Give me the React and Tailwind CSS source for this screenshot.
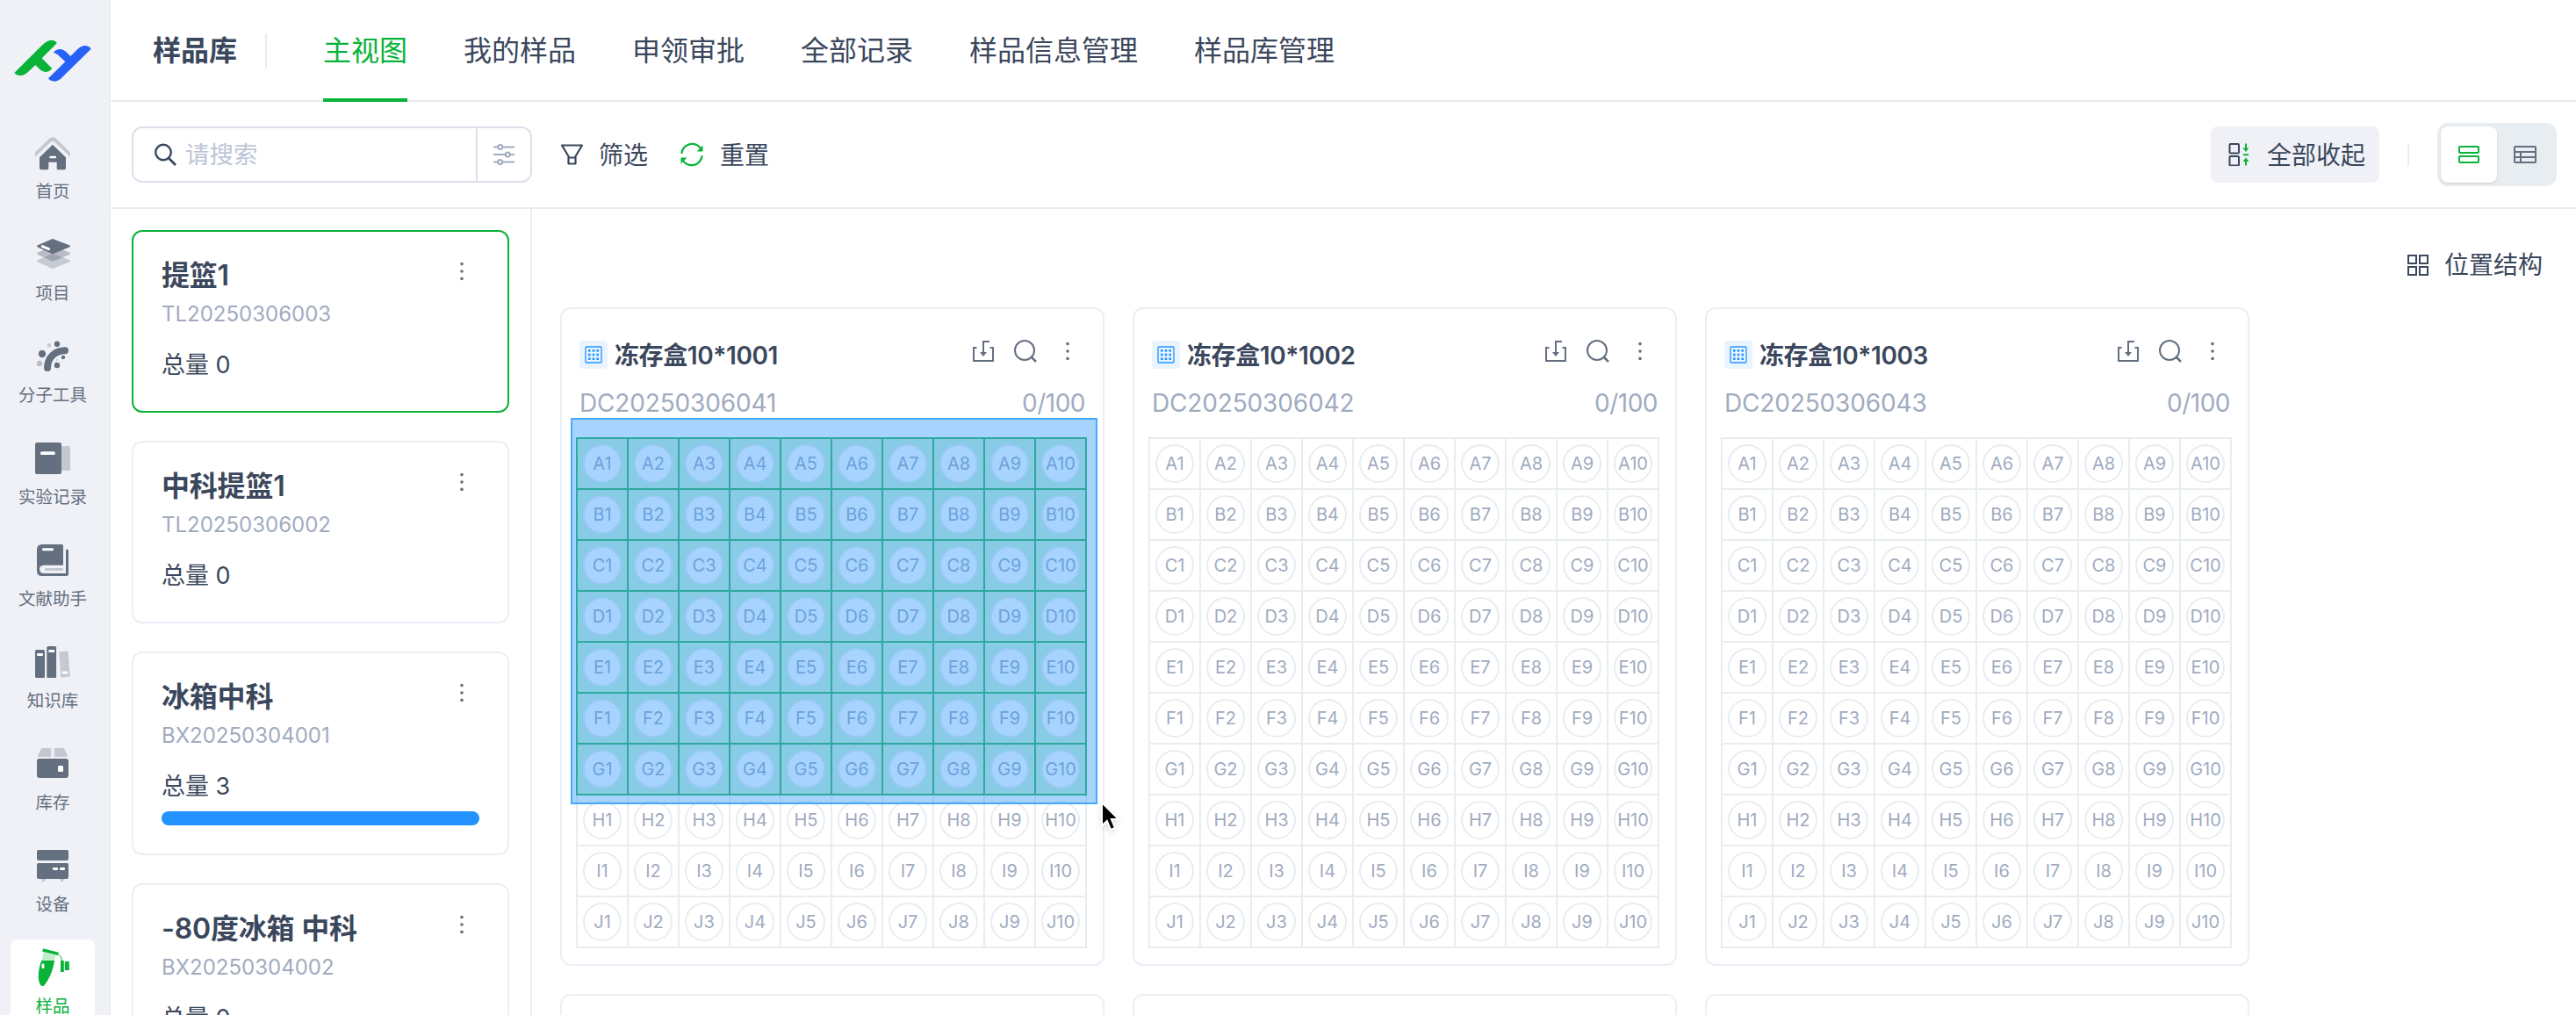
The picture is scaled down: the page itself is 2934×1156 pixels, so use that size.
import clsx from 'clsx';

const navItems = [
  { key: 'home', label: '首页' },
  { key: 'project', label: '项目' },
  { key: 'molecule', label: '分子工具' },
  { key: 'record', label: '实验记录' },
  { key: 'paper', label: '文献助手' },
  { key: 'library', label: '知识库' },
  { key: 'stock', label: '库存' },
  { key: 'device', label: '设备' },
  { key: 'sample', label: '样品' },
];

const tabs = ['主视图', '我的样品', '申领审批', '全部记录', '样品信息管理', '样品库管理'];

const containers = [
  { name: '提篮1', code: 'TL20250306003', total: 0, active: true },
  { name: '中科提篮1', code: 'TL20250306002', total: 0 },
  { name: '冰箱中科', code: 'BX20250304001', total: 3, percent: 100 },
  { name: '-80度冰箱 中科', code: 'BX20250304002', total: 0 },
];

const boxes = [
  { name: '冻存盒10*1001', code: 'DC20250306041', selectedRows: 7 },
  { name: '冻存盒10*1002', code: 'DC20250306042', selectedRows: 0 },
  { name: '冻存盒10*1003', code: 'DC20250306043', selectedRows: 0 },
];

const rows = ['A', 'B', 'C', 'D', 'E', 'F', 'G', 'H', 'I', 'J'];
const cols = [1, 2, 3, 4, 5, 6, 7, 8, 9, 10];

function Logo() {
  return (
    <svg className="w-[88px] h-12" viewBox="48 46 264 144">
      <path fill="#08b338" d="M49 160 L143 66 Q161 48 175 48 Q188 48 195 58 L143 110 L178 145 Q168 157 155 157 Q146 157 137 149 L121 133 L99 154 Q84 169 70 169 Q56 169 49 160Z" />
      <path fill="#2762f6" d="M183 90 Q192 79 205 79 Q214 79 223 86 L241 103 L262 82 Q277 67 290 67 Q304 67 311 78 L215 173 Q200 189 187 189 Q172 189 165 179 L223 122 L207 107 Q198 95 183 90Z" />
    </svg>
  );
}

const DARK = '#646f80';
const LIGHT = '#c4c9d1';

function NavIcon({ name }) {
  return (
    <svg className="size-12 shrink-0" viewBox="0 0 48 48" fill={DARK}>
      {name === 'home' && (
        <>
          <path fill={LIGHT} d="M4 23.5 L20.5 7.5 Q24 4.5 27.5 7.5 L44 23.5 V28.7 L26 11.5 Q24 10 22 11.5 L4 28.7Z" />
          <path d="M24 14.7 L39 29.3 V41.5 Q39 43.3 37.2 43.3 H30.2 Q28.7 43.3 28.7 41.8 V34.7 H19.3 V41.8 Q19.3 43.3 17.8 43.3 H10.8 Q9 43.3 9 41.5 V29.3Z" />
          <rect x="20.3" y="27.7" width="7.8" height="2.6" rx="1.2" fill="#fff" />
        </>
      )}
      {name === 'project' && (
        <>
          <path fill={DARK} fillOpacity="0.3" d="M25.3 23.2 L43 30 Q45 31.2 43 32.4 L25.3 39.6 Q24 40.2 22.7 39.6 L7 32.4 Q5 31.2 7 30 L22.7 23.2 Q24 22.6 25.3 23.2Z" />
          <path fill={DARK} fillOpacity="0.4" d="M25.3 14.8 L43 21.6 Q45 22.8 43 24 L25.3 31.2 Q24 31.8 22.7 31.2 L7 24 Q5 22.8 7 21.6 L22.7 14.8 Q24 14.2 25.3 14.8Z" />
          <path d="M25.3 6.4 L43 13.2 Q45 14.4 43 15.6 L25.3 22.8 Q24 23.4 22.7 22.8 L7 15.6 Q5 14.4 7 13.2 L22.7 6.4 Q24 5.8 25.3 6.4Z" />
          <path d="M12.3 14.6 L19.6 17.6" stroke="#fff" strokeWidth="3" strokeLinecap="round" />
        </>
      )}
      {name === 'molecule' && (
        <>
          <path d="M18 37 C18 26 26 17.2 38 17.2" fill="none" stroke={DARK} strokeWidth="8" strokeLinecap="round" />
          <circle cx="12" cy="21" r="4.2" />
          <circle cx="29" cy="9.8" r="3.2" />
          <circle cx="36" cy="25" r="2.2" />
          <circle cx="29" cy="34" r="3.2" />
          <circle cx="20" cy="11.3" r="2.2" fill={LIGHT} />
          <circle cx="9" cy="32" r="3.2" fill="#b8bdc6" />
          <circle cx="29" cy="28" r="1" fill={LIGHT} />
        </>
      )}
      {name === 'record' && (
        <>
          <rect x="28" y="10" width="16" height="28" rx="1.5" fill={LIGHT} />
          <rect x="4" y="6" width="30" height="36" rx="2" />
          <rect x="10" y="16.2" width="16.8" height="3.8" rx="1.5" fill="#fff" />
        </>
      )}
      {name === 'paper' && (
        <>
          <path d="M12 6 H34.5 Q36 6 36 7.5 V29.7 H14 Q9 30 9 34.3 Q9 39 14 39 H39 V12 H42 V40 Q42 42 40 42 H12 Q6 42 6 36 V12 Q6 6 12 6Z" />
          <rect x="12" y="10.2" width="13" height="3" rx="1.3" fill="#fff" />
          <rect x="15" y="33" width="21" height="3" rx="1.3" fill={LIGHT} />
        </>
      )}
      {name === 'library' && (
        <>
          <rect x="4" y="10" width="11" height="32" rx="1.5" />
          <rect x="17.3" y="6" width="10.8" height="36" rx="1.5" />
          <rect x="32.3" y="11.8" width="10.4" height="29.4" rx="1" fill={LIGHT} transform="rotate(-4 37.5 26.5)" />
          <rect x="6" y="14" width="7" height="3" rx="1.2" fill="#fff" />
          <rect x="19.2" y="10" width="7" height="3" rx="1.2" fill="#fff" />
          <rect x="34.8" y="34.5" width="6.4" height="3" rx="1" fill="#fff" />
        </>
      )}
      {name === 'stock' && (
        <>
          <path fill={LIGHT} d="M12.5 6 H21 Q22.3 6 22.3 7.3 V14.5 Q22.3 16 20.8 16 H8 Q6.6 16 7.2 14.5 L10.5 7.3 Q11 6 12.5 6Z" />
          <path fill={LIGHT} d="M35.5 6 H27 Q25.7 6 25.7 7.3 V14.5 Q25.7 16 27.2 16 H40 Q41.4 16 40.8 14.5 L37.5 7.3 Q37 6 35.5 6Z" />
          <rect x="6" y="18" width="36" height="22" rx="3" />
          <rect x="30" y="26" width="6" height="7" rx="1.2" fill="#fff" />
        </>
      )}
      {name === 'device' && (
        <>
          <path fill={LIGHT} d="M11 39 H16 L14.6 42.2 H12.6Z M32 39 H37 L35.6 42.2 H33.6Z" />
          <rect x="6" y="6" width="36" height="12" rx="2" />
          <rect x="6" y="21" width="36" height="18" rx="2" />
          <rect x="24" y="26" width="6" height="3" rx="1.3" fill="#fff" />
          <rect x="32" y="26" width="6" height="3" rx="1.3" fill="#fff" />
        </>
      )}
      {name === 'sample' && (
        <g fill="#08b338">
          <path d="M13.6 6.5 L27.4 10 L25.8 17 H11.2Z" fillOpacity="0.25" />
          <path d="M11.2 16 H26 C25 26 20 37 14.5 44.2 Q12.5 46 10.5 44.2 C6.5 39 7 27 11.2 16Z" />
          <path d="M12.6 4 L30.4 8.4" stroke="#08b338" strokeWidth="3.4" />
          <path d="M30 8.6 Q34.5 11.5 35 17" fill="none" stroke="#08b338" strokeWidth="1" />
          <rect x="33" y="16" width="3.8" height="13" />
          <rect x="37.8" y="17" width="5" height="10" />
          <rect x="11.5" y="19.5" width="3" height="5.6" rx="1.3" fill="#fff" />
        </g>
      )}
    </svg>
  );
}

function MoreIcon({ className }) {
  return (
    <svg className={clsx('w-6 h-6', className)} viewBox="0 0 24 24" fill="#646f80">
      <circle cx="12" cy="3.6" r="1.8" />
      <circle cx="12" cy="12" r="1.8" />
      <circle cx="12" cy="20.4" r="1.8" />
    </svg>
  );
}

function Sidebar() {
  return (
    <aside className="w-[126px] shrink-0 border-r-2 border-[#e8edf1] bg-[#f0f1f6] flex flex-col pt-[45px]">
      <div className="pl-4 h-[97px] shrink-0">
        <Logo />
      </div>
      <nav className="flex flex-col gap-3 pl-3 shrink-0">
        {navItems.map((item) => {
          const active = item.key === 'sample';
          return (
            <div
              key={item.key}
              className={clsx(
                'w-24 h-[104px] shrink-0 rounded-lg pt-2 flex flex-col items-center',
                active ? 'bg-white text-[#08b338]' : 'text-[#646f80]'
              )}
            >
              <NavIcon name={item.key} />
              <span className="mt-1 h-8 leading-8 text-[19.5px] whitespace-nowrap">{item.label}</span>
            </div>
          );
        })}
      </nav>
    </aside>
  );
}

function Header() {
  return (
    <header className="h-[116px] shrink-0 border-b-2 border-[#e8edf1] flex items-start pl-12">
      <div className="h-[116px] flex items-center text-[32px] font-semibold">样品库</div>
      <div className="w-0.5 h-10 mt-[38px] ml-8 mr-16 bg-[#e8edf1]" />
      <div className="flex gap-16 text-[32px]">
        {tabs.map((tab, i) => (
          <div
            key={tab}
            className={clsx(
              'h-[116px] pt-1 flex items-center border-b-4',
              i === 0 ? 'text-[#08b338] border-[#08b338]' : 'border-transparent'
            )}
          >
            {tab}
          </div>
        ))}
      </div>
    </header>
  );
}

function Toolbar() {
  return (
    <div className="h-[122px] shrink-0 border-b-2 border-[#e8edf1] flex items-center pl-6 pr-[22px] text-[28px]">
      <div className="w-[456px] h-16 border-2 border-[#dce0ea] rounded-xl flex items-center">
        <svg className="size-[26px] ml-[23px]" viewBox="0 0 26 26" fill="none" stroke="#3b475c" strokeWidth="2.4">
          <circle cx="11" cy="10.5" r="8.8" />
          <path d="M17 17 L25 25" strokeWidth="2.8" />
        </svg>
        <span className="ml-[10px] pt-0.5 flex-1 text-[27.5px] text-[#bcc6d6]">请搜索</span>
        <div className="w-[62px] h-full border-l-2 border-[#dce0ea] flex items-center justify-center">
          <svg className="size-6" viewBox="0 0 24 24" fill="none" stroke="#a1abbf" strokeWidth="2">
            <path d="M0 3.5 H5 M10.500 3.500 H24 M0 12 H13.500 M19 12 H24 M0 20.500 H5 M10.500 20.500 H24" />
            <circle cx="7.700" cy="3.500" r="2.500" />
            <circle cx="16.300" cy="12" r="2.500" />
            <circle cx="7.700" cy="20.500" r="2.500" />
          </svg>
        </div>
      </div>
      <svg className="size-[26px] ml-8" viewBox="0 0 26 26" fill="none" stroke="#3b475c" strokeWidth="2.2" strokeLinejoin="round">
        <path d="M2 2.500 H25 L17.500 15 V23.500 H9.500 V15Z M9.500 16.500 H17.500" />
      </svg>
      <span className="ml-[18px] pt-0.5">筛选</span>
      <svg className="size-7 ml-9" viewBox="0 0 28 28" fill="none" stroke="#08b338" strokeWidth="2.200">
        <path d="M2.300 12.800 A12 12 0 0 1 25 8.500" />
        <path d="M25.700 15.200 A12 12 0 0 1 3 19.500" />
        <path d="M26.500 3.500 V10.500 H19.500Z M1.500 24.500 V17.500 H8.500Z" fill="#08b338" stroke="none" />
      </svg>
      <span className="ml-[18px] pt-0.5">重置</span>

      <div className="ml-auto w-48 h-16 rounded-lg bg-[#f0f1f6] flex items-center pl-5">
        <svg className="size-[26px]" viewBox="0 0 26 26" fill="none" stroke="#3b475c" strokeWidth="2">
          <rect x="1.500" y="1" width="10.500" height="10.500" rx="1" />
          <rect x="1.500" y="15" width="10.500" height="10.500" rx="1" />
          <g stroke="none" fill="#08b338">
            <path d="M19 0.500 H21 V5.500 H23.500 L20 10 L16.500 5.500 H19Z" />
            <path d="M19 25.500 H21 V21 H23.500 L20 16.500 L16.500 21 H19Z" />
            <rect x="17" y="12.200" width="6" height="2" />
          </g>
        </svg>
        <span className="ml-[18px] pt-0.5">全部收起</span>
      </div>
      <div className="w-0.5 h-[26px] mx-8 bg-[#e8edf1]" />
      <div className="w-[136px] h-[72px] rounded-xl bg-[#e8edf1] p-1 flex">
        <div className="size-16 rounded-lg bg-white shadow-sm flex items-center justify-center">
          <svg className="w-6 h-5" viewBox="0 0 24 20" fill="none" stroke="#08b338" strokeWidth="2">
            <rect x="1" y="1" width="22" height="7" rx="1" />
            <rect x="1" y="12" width="22" height="7" rx="1" />
          </svg>
        </div>
        <div className="size-16 flex items-center justify-center">
          <svg className="w-[26px] h-5" viewBox="0 0 26 20" fill="none" stroke="#646f80" strokeWidth="2">
            <rect x="1" y="1" width="24" height="18" rx="1" />
            <path d="M1 7 H25 M1 13 H25 M8 7 V19" />
          </svg>
        </div>
      </div>
    </div>
  );
}

function ContainerCard({ item }) {
  return (
    <div
      className={clsx(
        'shrink-0 border-2 rounded-xl px-8 pt-8 text-[28px]',
        item.active ? 'border-[#08b338]' : 'border-[#ebeef5]',
        item.percent ? 'h-[232px]' : 'h-[208px]'
      )}
    >
      <div className="flex justify-between items-start">
        <div className="h-9 leading-9 text-[32px] font-semibold tracking-[-0.2px] whitespace-nowrap">{item.name}</div>
        <MoreIcon className="mr-2 mt-px" />
      </div>
      <div className="mt-2.5 h-8 leading-8 text-[24px] text-[#a1abbf]">{item.code}</div>
      <div className="mt-[22px] h-10 leading-10 text-[27px]">总量 {item.total}</div>
      {item.percent && (
        <div className="mt-2 h-4 rounded-full bg-[#e8edf1]">
          <div className="h-4 rounded-full bg-[#2493ff]" style={{ width: `${item.percent}%` }} />
        </div>
      )}
    </div>
  );
}

function Well({ label, selected }) {
  return (
    <div
      className={clsx(
        'w-[60px] h-[60px] -mr-0.5 -mb-0.5 border-2 flex items-center justify-center',
        selected ? 'relative border-[#38b65c] bg-[#cbf0d3]' : 'border-[#e8edf1]'
      )}
    >
      <div className="size-11 rounded-full border-2 border-[#e8edf1] bg-white flex items-center justify-center text-[20px] text-[#a1abbf]">
        {label}
      </div>
    </div>
  );
}

function BoxCard({ box }) {
  return (
    <div className="relative w-[620px] h-[750px] border-2 border-[#ebeef5] rounded-xl">
      <div className="h-8 mt-9 pl-5 pr-6 flex items-center">
        <div className="size-8 rounded bg-[#e9f4ff] flex items-center justify-center">
          <svg className="size-5" viewBox="0 0 20 20" fill="none" stroke="#2493ff" strokeWidth="1.300">
            <rect x="1" y="1" width="18" height="18" rx="1" />
            <g fill="#2493ff" stroke="none">
              {[4, 8.7, 13.4].map((y) =>
                [4, 8.7, 13.4].map((x) => <rect key={`${x}-${y}`} x={x} y={y} width="2.600" height="2.600" />)
              )}
            </g>
          </svg>
        </div>
        <span className="ml-2 pt-0.5 text-[28px] font-semibold tracking-[-0.4px]">{box.name}</span>
        <div className="ml-auto -mt-2 flex items-center">
          <svg className="size-6" viewBox="0 0 24 24" fill="none" stroke="#646f80" strokeWidth="2">
            <path d="M4.500 8 H1 V23 H23 V8 H19.500" />
            <path d="M19 1 H12 V14" />
            <path d="M8 13 H16 L12 18Z" fill="#646f80" stroke="none" />
          </svg>
          <svg className="size-[26px] ml-[23px]" viewBox="0 0 26 26" fill="none" stroke="#646f80" strokeWidth="2">
            <circle cx="12" cy="12" r="11" />
            <path d="M19 19 L25 25" strokeWidth="2.500" />
          </svg>
          <MoreIcon className="ml-[23px] mr-[4px]" />
        </div>
      </div>
      <div className="mt-[18px] h-10 pt-px pl-5 pr-5 flex items-center justify-between text-[28px] tracking-[-0.15px] text-[#a1abbf]">
        <span>{box.code}</span>
        <span className="tracking-[-0.5px]">0/100</span>
      </div>
      <div className="mt-5 ml-4 grid grid-cols-[repeat(10,58px)] auto-rows-[58px]">
        {rows.map((row, r) =>
          cols.map((col) => <Well key={row + col} label={row + col} selected={r < box.selectedRows} />)
        )}
      </div>
      {box.selectedRows > 0 && (
        <>
          {/* drag selection and pointer sit over the wells */}
          <div className="absolute left-[10px] top-[124px] w-[600px] h-[440px] border-2 border-[#45a9ff] bg-[#2493ff]/40 bg-clip-padding" />
          <svg className="absolute left-[612px] top-[559px] w-[28px] h-[42px] drop-shadow-md" viewBox="0 0 28 42">
            <path d="M3 3 V29.500 L8.800 24 L13 34 L18 31.800 L13.800 22 H22Z" fill="#000" stroke="#fff" strokeWidth="2" />
          </svg>
        </>
      )}
    </div>
  );
}

export default function App() {
  return (
    <div className="h-screen overflow-hidden flex bg-white text-[#3b475c] font-[Inter,'Noto_Sans_CJK_SC',sans-serif] [font-feature-settings:'calt'_0]">
      <Sidebar />
      <div className="flex-1 min-w-0 flex flex-col">
        <Header />
        <Toolbar />
        <div className="flex-1 min-h-0 flex">
          <div className="w-[480px] shrink-0 border-r-2 border-[#ebeef5] px-6 pt-6 flex flex-col gap-8 overflow-hidden">
            {containers.map((item) => (
              <ContainerCard key={item.code} item={item} />
            ))}
          </div>
          <main className="flex-1 min-w-0 overflow-hidden pl-8">
            <div className="h-[112px] pt-4 pr-[38px] flex items-center justify-end">
              <svg className="size-6" viewBox="0 0 24 24" fill="none" stroke="#3b475c" strokeWidth="2">
                <path d="M1 1 H10 V10 H1Z M14 1 H23 V10 H14Z M1 14 H10 V23 H1Z M14 14 H23 V23 H14Z" />
              </svg>
              <span className="ml-[18px] text-[28px]">位置结构</span>
            </div>
            <div className="grid grid-cols-[repeat(3,620px)] gap-8">
              {boxes.map((box) => (
                <BoxCard key={box.code} box={box} />
              ))}
              {boxes.map((box) => (
                <div key={box.name} className="h-[750px] border-2 border-[#ebeef5] rounded-xl" />
              ))}
            </div>
          </main>
        </div>
      </div>
    </div>
  );
}
